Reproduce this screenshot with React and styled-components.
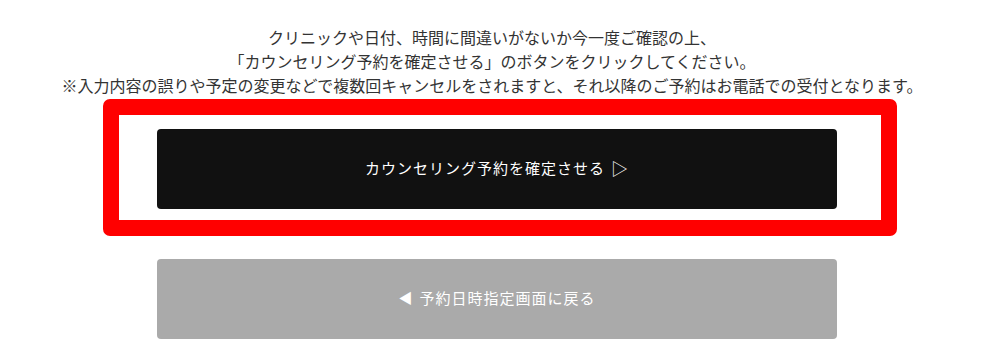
import React from "react";
import styled, { createGlobalStyle } from "styled-components";

const GlobalStyle = createGlobalStyle`
  html, body {
    margin: 0;
    padding: 0;
    background: #fff;
  }
  body {
    font-family: "Noto Sans CJK JP", "Noto Sans", sans-serif;
  }
`;

const Page = styled.div`
  width: 990px;
  height: 356px;
  display: flex;
  flex-direction: column;
  align-items: center;
  padding-top: 25px;
  box-sizing: border-box;
`;

const Notice = styled.p`
  margin: 0 0 0 -6px;
  font-size: 16px;
  line-height: 24px;
  color: #333;
  text-align: center;
`;

const Actions = styled.div`
  display: flex;
  flex-direction: column;
  gap: 50px;
  margin-top: 32px;
  margin-left: 4px;
`;

const Button = styled.button`
  position: relative;
  width: 680px;
  height: 80px;
  padding: 0 0 4px;
  border: none;
  border-radius: 4px;
  background: ${(p) => (p.$variant === "back" ? "#aaaaaa" : "#111111")};
  color: #fff;
  font-family: "Noto Sans CJK JP", "Noto Sans", sans-serif;
  font-size: 15px;
  letter-spacing: 1px;
  display: flex;
  align-items: center;
  justify-content: center;
  gap: 6px;
  cursor: pointer;
`;

// red annotation frame drawn over the confirm button
const Highlight = styled.span`
  position: absolute;
  top: -30px;
  left: -54px;
  right: -60px;
  bottom: -27px;
  border: 16px solid #ff0000;
  border-radius: 7px;
  pointer-events: none;
`;

const Arrow = styled.span`
  font-size: ${(p) => (p.$big ? "17px" : "14px")};
  line-height: 1;
`;

export default function App() {
  return (
    <>
      <GlobalStyle />
      <Page>
        <Notice>
          クリニックや日付、時間に間違いがないか今一度ご確認の上、
          <br />
          「カウンセリング予約を確定させる」のボタンをクリックしてください。
          <br />
          ※入力内容の誤りや予定の変更などで複数回キャンセルをされますと、それ以降のご予約はお電話での受付となります。
        </Notice>
        <Actions>
          <Button type="button">
            カウンセリング予約を確定させる <Arrow $big>▷</Arrow>
            <Highlight />
          </Button>
          <Button type="button" $variant="back">
            <Arrow>◀</Arrow> 予約日時指定画面に戻る
          </Button>
        </Actions>
      </Page>
    </>
  );
}
